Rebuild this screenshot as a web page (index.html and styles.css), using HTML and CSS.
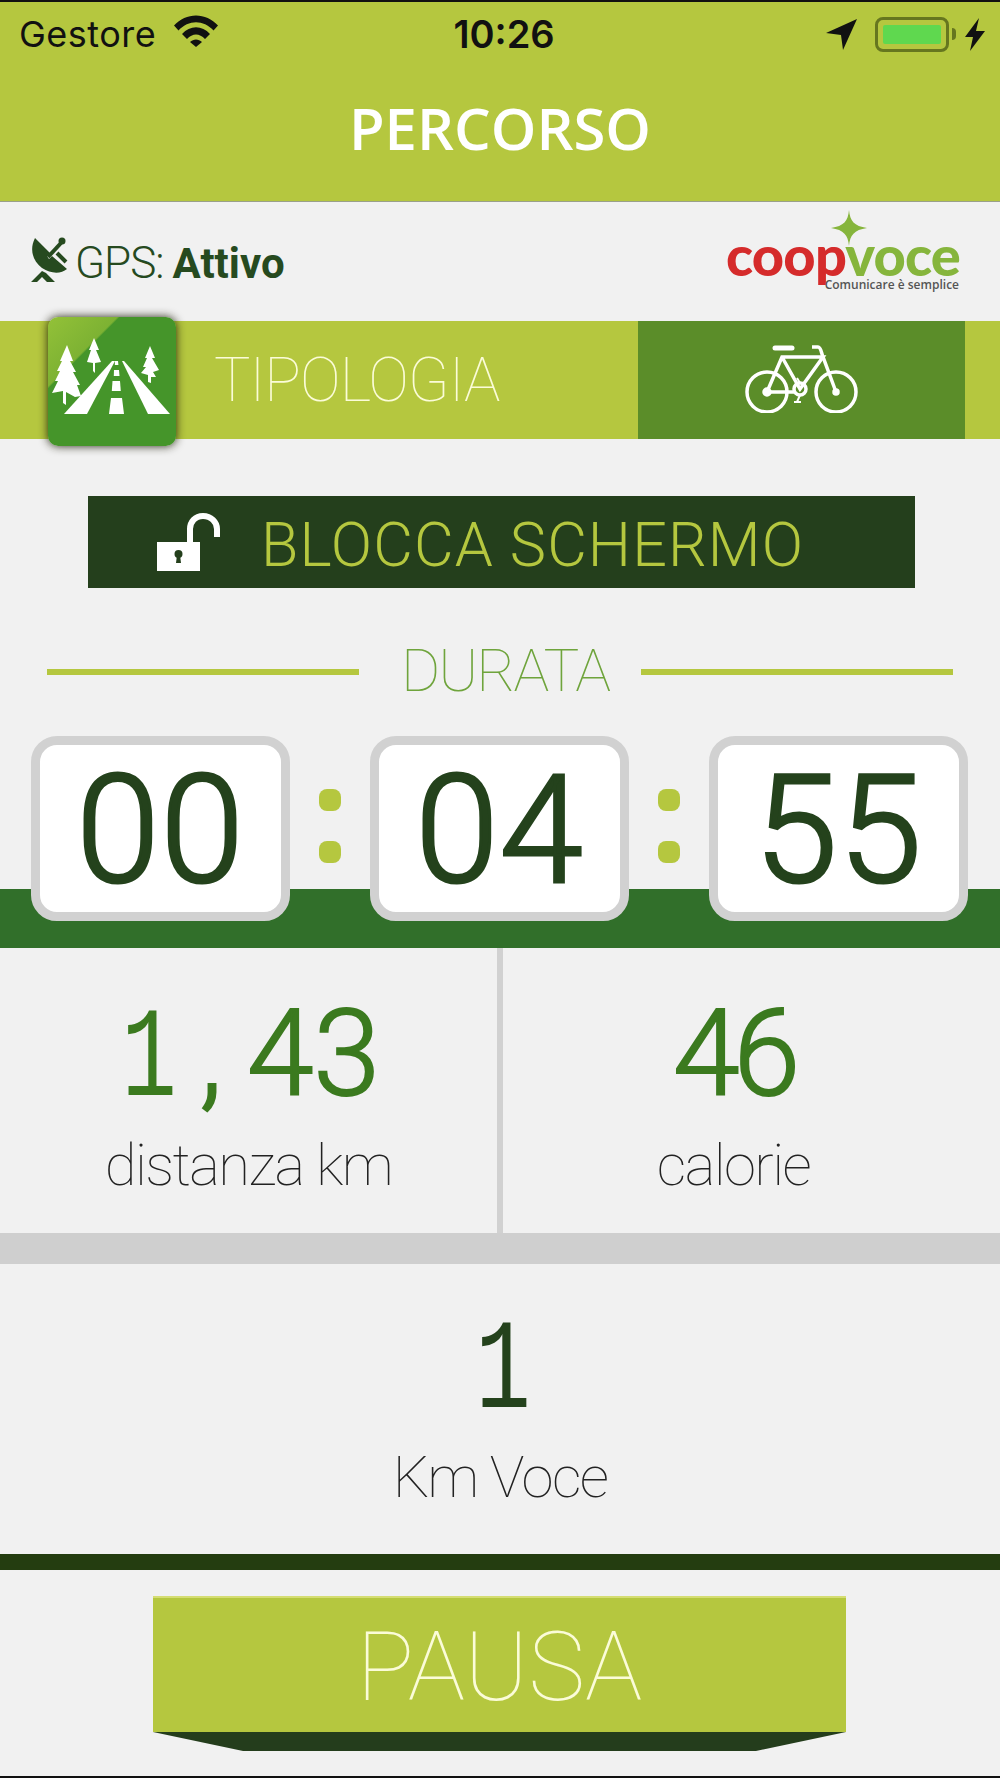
FILE: index.html
```html
<!DOCTYPE html>
<html lang="en">

<head>
    <meta charset="UTF-8">
    <meta name="viewport" content="width=device-width, initial-scale=1.0">
    <title>Percorso</title>
    <link rel="stylesheet" href="styles.css">
</head>

<body>
    <div class="header">
        <div class="statusbar">
            <div class="status-left">
                <span class="carrier">Gestore</span>
                <svg class="wifi" viewBox="0 0 44 32" width="44" height="32">
                    <path d="M0 10.500C12-3 32-3 44 10.500L39.500 15.500C29.500 4.500 14.500 4.500 4.500 15.500Z" />
                    <path d="M8 19C16 10 28 10 36 19L31 24C25.500 18 18.500 18 13 24Z" />
                    <path d="M16 27C19.500 23.500 24.500 23.500 28 27L22 32Z" />
                </svg>
            </div>
            <span class="clock">10:26</span>
            <div class="status-right">
                <svg class="arrow" viewBox="0 0 31 31" width="31" height="31">
                    <path d="M31 0L17 31L15 16L0 14Z" />
                </svg>
                <div class="battery"><div class="battery-fill"></div></div>
                <div class="battery-nub"></div>
                <svg class="bolt" viewBox="0 0 20 33" width="20" height="33">
                    <path d="M14 0L0 19H8L5 33L20 13H11Z" />
                </svg>
            </div>
        </div>
        <h1 class="title">PERCORSO</h1>
    </div>

    <div class="gps-row">
        <div class="gps">
            <svg class="dish" viewBox="0 0 38 48" width="38" height="48">
                <path d="M4 2C-2 14 2 25 11 32C20 38 30 38 36 33L21 20L18 23L16 20L19 17Z" />
                <path d="M17 21L30 7" class="dish-line" />
                <circle cx="31" cy="5" r="3.500" />
                <path d="M26 17L35 26" class="dish-line" />
                <path d="M0 46L11 35L15 37L24 46H16L11 41L6 46Z" />
            </svg>
            <span class="gps-label">GPS:</span>
            <span class="gps-value">Attivo</span>
        </div>
        <div class="logo">
            <svg class="logo-star" viewBox="0 0 36 36" width="36" height="36">
                <path d="M18 0C19 11 23 16 36 18C23 20 19 25 18 36C17 25 13 20 0 18C13 16 17 11 18 0Z" />
            </svg>
            <div class="logo-word"><span class="coop">coop</span><span class="voce">voce</span></div>
            <div class="logo-tag">Comunicare è semplice</div>
        </div>
    </div>

    <div class="type-row">
        <div class="type-icon">
            <svg viewBox="0 0 128 129" width="128" height="129">
                <path d="M19 28L25 44H22L28 55H25L32 68H29L33 79L27 80L18 75V88L15 86V74L4 76L10 64H7L12 54H9L14 44H12Z" />
                <path d="M46 21L51 33H48L53 45L47 46V56L45 54V46L39 45L43 33H41Z" />
                <path d="M102 29L107 41H104L111 53L105 55L108 60L103 60V66L100 65V58L93 56L98 50H95L99 41H97Z" />
                <path d="M16 97L64 44H67L39 97Z" />
                <path d="M74 44H76L122 97H100Z" />
                <path d="M63 81H74L76 97H61Z" />
                <path d="M64.500 64H72L72.800 74H63.800Z" />
                <path d="M66 53H71L71.500 59H65.800Z" />
                <path d="M67 44H70L70.400 48H66.800Z" />
            </svg>
        </div>
        <span class="type-label">TIPOLOGIA</span>
        <div class="type-bike">
            <svg class="bike" viewBox="0 0 114 70" width="114" height="70">
                <circle cx="22" cy="49" r="20" />
                <circle cx="91" cy="49" r="20" />
                <circle cx="55" cy="46" r="6" />
                <path d="M22 49L37 14H78L55 46L37 14M22 49H49" />
                <path d="M67 4H73C76 4 76 9 78 14L91 49" />
                <path d="M30 5H47" class="bike-seat" />
                <path d="M52 35L55 40M55 52L52 59M49 59H56" class="bike-thin" />
                <circle cx="22" cy="49" r="3" class="bike-hub" />
                <circle cx="91" cy="49" r="2" class="bike-hub" />
            </svg>
        </div>
    </div>

    <div class="lock-btn">
        <svg class="lock" viewBox="0 0 63 58" width="63" height="58">
            <path d="M0 29H43V58H0Z" />
            <path d="M33 29V16C33 9 38 3 46 3C54 3 60 9 60 16V24" class="shackle" />
            <circle cx="21.500" cy="41" r="4" class="keyhole" />
            <path d="M20 42H23L24 50H19Z" class="keyhole" />
        </svg>
        <span class="lock-label">BLOCCA SCHERMO</span>
    </div>

    <div class="durata">
        <div class="durata-line"></div>
        <span class="durata-label">DURATA</span>
        <div class="durata-line"></div>
    </div>

    <div class="timer">
        <div class="time-box">00</div>
        <div class="colon"><i></i><i></i></div>
        <div class="time-box">04</div>
        <div class="colon"><i></i><i></i></div>
        <div class="time-box">55</div>
    </div>

    <div class="stats">
        <div class="stat">
            <div class="stat-num"><span class="slab">1</span><span class="comma">,</span>43</div>
            <div class="stat-label">distanza km</div>
        </div>
        <div class="stat stat-right">
            <div class="stat-num tight">46</div>
            <div class="stat-label">calorie</div>
        </div>
    </div>

    <div class="km-voce">
        <div class="stat-num dark"><span class="slab">1</span></div>
        <div class="stat-label">Km Voce</div>
    </div>

    <div class="bottom">
        <div class="pause-btn">PAUSA</div>
        <div class="pause-fold"></div>
    </div>
</body>

</html>
```

FILE: styles.css
```css
* {
    box-sizing: border-box;
}

body {
    margin: 0;
    width: 1000px;
    height: 1778px;
    overflow: hidden;
    background: #f1f1f1;
    border-top: 2px solid #111;
    border-bottom: 2px solid #111;
    font-family: "Roboto", sans-serif;
}

/* header */
.header {
    height: 200px;
    background: #b5c73f;
    border-bottom: 1px solid #9aa08a;
}

.statusbar {
    height: 64px;
    padding: 0 15px 0 19px;
    display: grid;
    grid-template-columns: 1fr auto 1fr;
    align-items: center;
    color: #111;
}

.status-left {
    display: flex;
    align-items: center;
    gap: 18px;
}

.carrier {
    font-family: "Inter", sans-serif;
    font-size: 36px;
    letter-spacing: 0.5px;
    line-height: 40px;
}

.wifi {
    margin-top: -6px;
    fill: #111;
}

.clock {
    margin-left: 4px;
    font-family: "Inter", sans-serif;
    font-size: 38px;
    font-weight: 600;
}

.status-right {
    display: flex;
    align-items: center;
    justify-content: flex-end;
}

.arrow,
.bolt {
    fill: #111;
}

.arrow {
    margin-right: 18px;
}

.battery {
    width: 74px;
    height: 35px;
    padding: 5px;
    border: 3px solid #66761f;
    border-radius: 8px;
}

.battery-fill {
    height: 100%;
    background: #5fd84f;
    border-radius: 2px;
}

.battery-nub {
    width: 4px;
    height: 12px;
    margin: 0 9px 0 3px;
    background: #66761f;
    border-radius: 0 4px 4px 0;
}

.title {
    margin: 24px 0 0;
    text-align: center;
    color: #fff;
    font-family: "Open Sans", sans-serif;
    font-size: 58px;
    line-height: 76px;
    font-weight: 600;
}

/* gps row */
.gps-row {
    height: 119px;
    padding: 0 41px 0 31px;
    display: flex;
    justify-content: space-between;
    align-items: flex-start;
}

.gps {
    margin-top: 35px;
    display: flex;
    align-items: center;
    color: #264a1f;
    font-size: 44px;
}

.dish {
    fill: #264a1f;
    margin-right: 6px;
    margin-top: -6px;
}

.dish-line {
    fill: none;
    stroke: #264a1f;
    stroke-width: 4;
}

.gps-label {
    font-weight: 300;
    margin-right: 9px;
    letter-spacing: -1px;
}

.gps-value {
    font-weight: 700;
    font-size: 42px;
}

.logo {
    position: relative;
    width: 233px;
    padding-top: 28px;
    text-align: right;
}

.logo-star {
    position: absolute;
    top: 8px;
    left: 105px;
    fill: #86b53c;
}

.logo-word {
    font-family: "Lato", sans-serif;
    font-weight: 900;
    font-size: 56px;
    line-height: 50px;
    letter-spacing: -0.8px;
    white-space: nowrap;
}

.coop {
    color: #d52b2b;
}

.voce {
    color: #86b53c;
}

.logo-tag {
    margin-top: -3px;
    color: #555;
    font-family: "Open Sans", sans-serif;
    font-size: 12px;
    font-weight: 600;
    line-height: 16px;
}

/* type row */
.type-row {
    position: relative;
    height: 118px;
    padding-left: 214px;
    display: flex;
    align-items: center;
    background: #b5c73f;
}

.type-icon {
    position: absolute;
    left: 48px;
    top: -4px;
    width: 128px;
    height: 129px;
    border-radius: 10px;
    background: linear-gradient(135deg, #93c138 0, #7db233 27%, #45952a 28%);
    box-shadow: 0 0 10px rgba(30, 30, 10, 0.95);
    fill: #fff;
}

.type-icon svg {
    display: block;
}

.type-label {
    color: #fbfcd8;
    font-size: 61px;
    font-weight: 100;
    line-height: 70px;
    letter-spacing: -1px;
}

.type-bike {
    position: absolute;
    left: 638px;
    top: 0;
    width: 327px;
    height: 118px;
    padding-bottom: 4px;
    display: flex;
    align-items: center;
    justify-content: center;
    background: #5b8d29;
}

.bike {
    fill: none;
    stroke: #fff;
    stroke-width: 3.500;
}

.bike-seat {
    stroke-width: 5;
    stroke-linecap: round;
}

.bike-thin {
    stroke-width: 2;
}

.bike-hub {
    fill: #fff;
}

/* lock button */
.lock-btn {
    width: 827px;
    height: 92px;
    margin: 57px 0 0 88px;
    padding-left: 69px;
    display: flex;
    align-items: center;
    gap: 41px;
    background: #243f1c;
    color: #b5c73f;
    font-size: 61px;
    font-weight: 300;
}

.lock-label {
    letter-spacing: 1.1px;
    margin-top: 6px;
}

.lock {
    fill: #fff;
}

.shackle {
    fill: none;
    stroke: #fff;
    stroke-width: 6;
}

.keyhole {
    fill: #243f1c;
}

/* durata */
.durata {
    height: 148px;
    padding: 0 47px;
    display: flex;
    justify-content: space-between;
    align-items: center;
}

.durata-line {
    width: 312px;
    height: 6px;
    margin-top: 20px;
    background: #b5c73f;
}

.durata-label {
    color: #6fa43c;
    font-size: 60px;
    font-weight: 100;
    line-height: 70px;
    letter-spacing: -2px;
    margin: 18px 0 0 10px;
}

/* timer */
.timer {
    height: 212px;
    padding: 0 32px 27px 31px;
    display: grid;
    grid-template-columns: 259px 1fr 259px 1fr 259px;
    grid-template-rows: 185px;
    background: linear-gradient(#f1f1f1 153px, #316f2a 153px);
}

.time-box {
    display: flex;
    align-items: center;
    justify-content: center;
    padding-top: 4px;
    background: #fff;
    border: 9px solid #d1d1d1;
    border-radius: 26px;
    color: #24421c;
    font-size: 150px;
    font-weight: 300;
    line-height: 1;
    letter-spacing: 1px;
    -webkit-text-stroke: 3px #24421c;
}

.colon {
    padding-top: 53px;
    display: flex;
    flex-direction: column;
    align-items: center;
    gap: 30px;
}

.colon i {
    width: 22px;
    height: 22px;
    border-radius: 8px;
    background: #b5c73f;
}

/* stats */
.stats {
    height: 285px;
    display: grid;
    grid-template-columns: 1fr 1fr;
}

.stat {
    padding-top: 45px;
    text-align: center;
}

.stat:first-child {
    border-right: 3px solid #d1d1d1;
}

.stat-right {
    border-left: 3px solid #d1d1d1;
    padding-right: 36px;
}

.stat-num {
    height: 122px;
    color: #3b7a1f;
    font-size: 120px;
    font-weight: 300;
    line-height: 122px;
    -webkit-text-stroke: 2px #3b7a1f;
}

.slab {
    display: inline-block;
    width: 68px;
    margin: 0 -5px;
    font-family: "Liberation Mono", monospace;
    font-size: 128px;
    font-weight: 400;
    transform: scaleX(0.72);
    -webkit-text-stroke: 0;
}

.comma {
    display: inline-block;
    width: 72px;
    text-align: center;
}

.tight {
    letter-spacing: -6px;
}

.stat-label {
    margin-top: 15px;
    color: #222;
    font-size: 58px;
    font-weight: 100;
    line-height: 70px;
    letter-spacing: -1.6px;
}

.km-voce {
    height: 337px;
    padding-top: 41px;
    text-align: center;
    border-top: 31px solid #cfcfcf;
    border-bottom: 16px solid #243d10;
}

.dark {
    color: #24421c;
}

/* bottom */
.bottom {
    padding-top: 26px;
}

.pause-btn {
    width: 693px;
    height: 136px;
    margin-left: 153px;
    padding-top: 4px;
    display: flex;
    align-items: center;
    justify-content: center;
    background: #b5c73f;
    border-top: 2px solid #d5dd73;
    color: #fbfcd8;
    font-size: 96px;
    font-weight: 100;
}

.pause-fold {
    width: 693px;
    height: 19px;
    margin-left: 153px;
    background: #243d1c;
    clip-path: polygon(0 0, 100% 0, 87% 100%, 13% 100%);
}
```
